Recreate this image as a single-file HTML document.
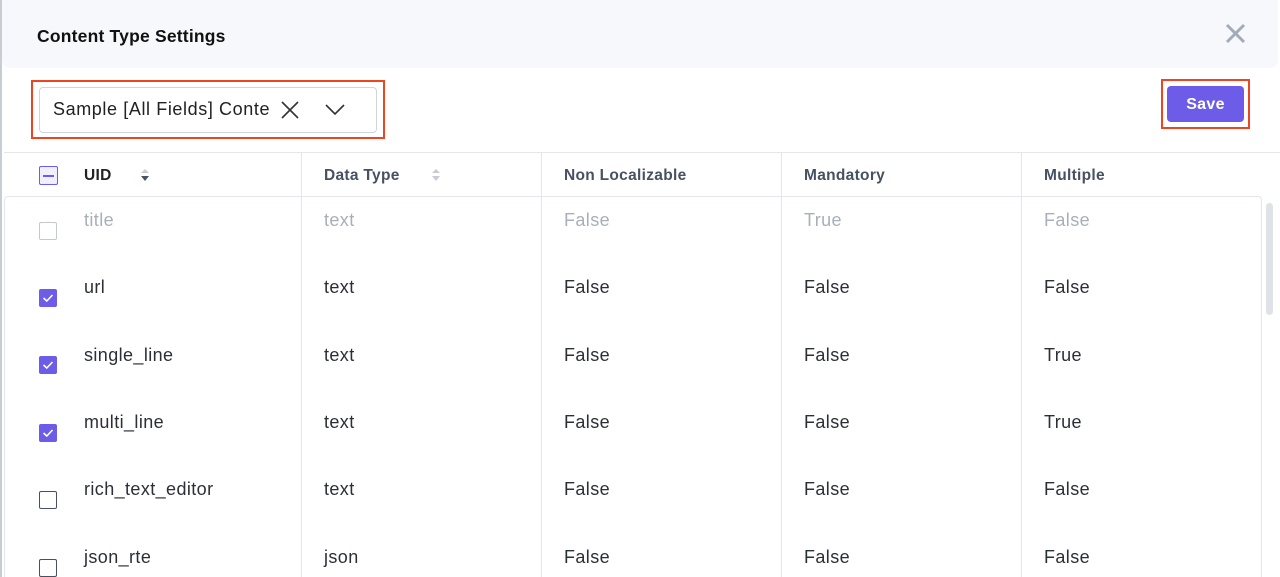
<html><head><style>
body{margin:0;width:1280px;height:577px;overflow:hidden;background:#fff;font-family:"Liberation Sans",sans-serif;position:relative}
.a{position:absolute}
.hdr{left:2px;top:0;width:1276px;height:68px;background:#f7f8fc;border-radius:0 0 8px 8px}
.t{font-size:18px;color:#2b2f36;letter-spacing:0.4px}
.h{font-size:15.5px;font-weight:bold;color:#475161;letter-spacing:0.3px}
.cb{width:18px;height:18px;border:1.5px solid #475161;border-radius:2px;box-sizing:border-box}
.cc{width:18px;height:18px;background:#6c5ce7;border-radius:2px}
.vl{width:1px;background:#e3e6ee;top:152px;height:425px}
.g{color:#a9afb9}
</style></head><body>
<div class="a" style="left:0;top:0;width:1280px;height:577px;border-left:2px solid #c8ccd3;box-sizing:border-box"></div>
<div class="a hdr"></div>
<div class="a" style="left:37px;top:26px;font-size:17.5px;font-weight:bold;color:#111;letter-spacing:0.2px">Content Type Settings</div>
<svg class="a" style="left:1225px;top:23px" width="21" height="21"><path d="M2 2L19 19M19 2L2 19" stroke="#a2abb8" stroke-width="3"/></svg>
<div class="a" style="left:31px;top:80px;width:354px;height:59px;border:2px solid #ee4422;box-sizing:border-box"></div>
<div class="a" style="left:39px;top:87px;width:338px;height:46px;border:1.5px solid #d0d4db;border-radius:4px;box-sizing:border-box"></div>
<div class="a t" style="left:53px;top:99px;color:#222;letter-spacing:0.6px">Sample [All Fields] Conte</div>
<svg class="a" style="left:281px;top:101px" width="18" height="18"><path d="M1 1L17 17M17 1L1 17" stroke="#333" stroke-width="1.6"/></svg>
<svg class="a" style="left:325px;top:104px" width="20" height="12"><path d="M1 1L10 10L19 1" stroke="#333" stroke-width="1.6" fill="none"/></svg>
<div class="a" style="left:1161px;top:79px;width:89px;height:50px;border:2px solid #ee4422;box-sizing:border-box"></div>
<div class="a" style="left:1167px;top:86px;width:77px;height:36px;background:#6c5ce7;border-radius:4px;color:#fff;font-weight:bold;font-size:16px;text-align:center;line-height:37px;letter-spacing:0.3px">Save</div>
<div class="a" style="left:4px;top:152px;width:1276px;height:1px;background:#e3e6ee"></div>
<div class="a" style="left:4px;top:196px;width:1258px;height:381px;border:1px solid #e3e6ee;border-bottom:none;border-radius:4px 4px 0 0;box-sizing:border-box"></div>
<div class="a" style="left:1266px;top:203px;width:7px;height:112px;background:#dfe2e9;border-radius:4px"></div>
<div class="a vl" style="left:301px"></div><div class="a vl" style="left:541px"></div><div class="a vl" style="left:781px"></div><div class="a vl" style="left:1021px"></div>
<div class="a" style="left:39px;top:166px;width:19px;height:19px;border:1.5px solid #6c5ce7;border-radius:2px;box-sizing:border-box;background:#f0eeff"><div style="margin:7.5px 3px;height:2px;background:#6c5ce7"></div></div>
<div class="a h" style="left:84px;top:167px;color:#222">UID</div>
<svg class="a" style="left:140px;top:168px" width="10" height="14"><path d="M1 5L5 1L9 5Z" fill="#c8ccd6"/><path d="M1 8L5 13L9 8Z" fill="#475161"/></svg>
<div class="a h" style="left:324px;top:167px">Data Type</div>
<svg class="a" style="left:431px;top:168px" width="10" height="14"><path d="M1 5L5 1L9 5Z" fill="#c8ccd6"/><path d="M1 8L5 13L9 8Z" fill="#c8ccd6"/></svg>
<div class="a h" style="left:564px;top:167px">Non Localizable</div>
<div class="a h" style="left:804px;top:167px">Mandatory</div>
<div class="a h" style="left:1044px;top:167px">Multiple</div>

<div class="a cb" style="left:39px;top:222px;border-color:#c4c8cf"></div>
<div class="a t g" style="left:84px;top:210px">title</div><div class="a t g" style="left:324px;top:210px">text</div><div class="a t g" style="left:564px;top:210px">False</div><div class="a t g" style="left:804px;top:210px">True</div><div class="a t g" style="left:1044px;top:210px">False</div>

<svg class="a cc" style="left:39px;top:289px" viewBox="0 0 18 18"><path d="M4.5 9L7.8 12L13.5 6" stroke="#fff" stroke-width="1.6" fill="none"/></svg>
<div class="a t" style="left:84px;top:277px">url</div><div class="a t" style="left:324px;top:277px">text</div><div class="a t" style="left:564px;top:277px">False</div><div class="a t" style="left:804px;top:277px">False</div><div class="a t" style="left:1044px;top:277px">False</div>

<svg class="a cc" style="left:39px;top:356px" viewBox="0 0 18 18"><path d="M4.5 9L7.8 12L13.5 6" stroke="#fff" stroke-width="1.6" fill="none"/></svg>
<div class="a t" style="left:84px;top:345px">single_line</div><div class="a t" style="left:324px;top:345px">text</div><div class="a t" style="left:564px;top:345px">False</div><div class="a t" style="left:804px;top:345px">False</div><div class="a t" style="left:1044px;top:345px">True</div>

<svg class="a cc" style="left:39px;top:424px" viewBox="0 0 18 18"><path d="M4.5 9L7.8 12L13.5 6" stroke="#fff" stroke-width="1.6" fill="none"/></svg>
<div class="a t" style="left:84px;top:412px">multi_line</div><div class="a t" style="left:324px;top:412px">text</div><div class="a t" style="left:564px;top:412px">False</div><div class="a t" style="left:804px;top:412px">False</div><div class="a t" style="left:1044px;top:412px">True</div>

<div class="a cb" style="left:39px;top:491px"></div>
<div class="a t" style="left:84px;top:479px">rich_text_editor</div><div class="a t" style="left:324px;top:479px">text</div><div class="a t" style="left:564px;top:479px">False</div><div class="a t" style="left:804px;top:479px">False</div><div class="a t" style="left:1044px;top:479px">False</div>

<div class="a cb" style="left:39px;top:559px"></div>
<div class="a t" style="left:84px;top:547px">json_rte</div><div class="a t" style="left:324px;top:547px">json</div><div class="a t" style="left:564px;top:547px">False</div><div class="a t" style="left:804px;top:547px">False</div><div class="a t" style="left:1044px;top:547px">False</div>
</body></html>
